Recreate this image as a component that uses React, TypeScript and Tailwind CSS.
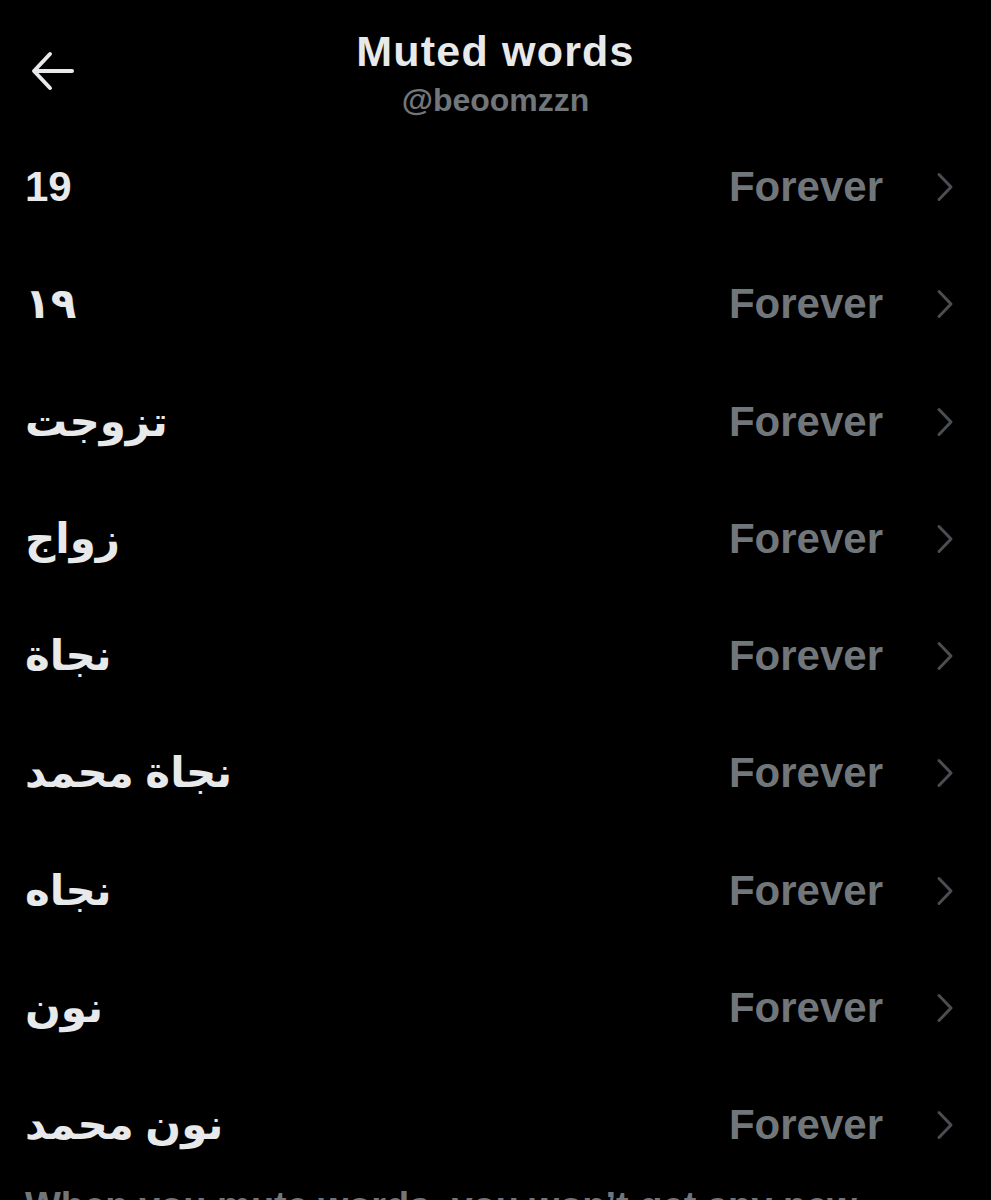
import React from "react";

const words = [
  "19",
  "١٩",
  "تزوجت",
  "زواج",
  "نجاة",
  "نجاة محمد",
  "نجاه",
  "نون",
  "نون محمد",
];

function Chevron() {
  return (
    <svg width="18" height="30" viewBox="0 0 18 30" fill="none" className="block">
      <path d="M3 2.5 L15 15 L3 27.5" stroke="#4a4d51" strokeWidth="3" strokeLinecap="round" strokeLinejoin="round" />
    </svg>
  );
}

function BackArrow() {
  return (
    <svg width="44" height="40" viewBox="0 0 44 40" fill="none" className="block">
      <path d="M41 20 H4" stroke="#e7e9ea" strokeWidth="4" strokeLinecap="round" />
      <path d="M19 3 L3 20 L19 37" stroke="#e7e9ea" strokeWidth="4" strokeLinecap="round" strokeLinejoin="round" />
    </svg>
  );
}

export default function App() {
  return (
    <div
      className="w-[991px] h-[1200px] overflow-hidden bg-black"
      style={{ fontFamily: '"Liberation Sans", "DejaVu Sans", Arial, sans-serif' }}
    >
      <div className="h-[128.5px] grid grid-cols-[1fr_auto_1fr]">
        <div className="pl-[31px] pt-[51px]">
          <BackArrow />
        </div>
        <div className="flex flex-col items-center pt-[30px]">
          <div className="text-[43px] leading-[43px] font-bold text-[#e7e9ea] tracking-[1.2px]">Muted words</div>
          <div className="mt-[11px] text-[32px] leading-[32px] font-bold text-[#71767b]">@beoomzzn</div>
        </div>
        <div />
      </div>
      {words.map((w, i) => (
        <div key={i} className="h-[117.25px] flex items-center justify-between pl-[25px] pr-[37px]">
          <span className="text-[42px] leading-[42px] font-bold text-[#e7e9ea]">{w}</span>
          <div className="flex items-center gap-[53px]">
            <span className="text-[42px] leading-[42px] font-bold text-[#71767b]">Forever</span>
            <Chevron />
          </div>
        </div>
      ))}
      <div className="-mt-[1px] px-[25px] text-[38px] leading-[46px] font-bold text-[#71767b]">
        When you mute words, you won’t get any new notifications for Tweets that include them or see Tweets with these words in your timeline.
      </div>
    </div>
  );
}
